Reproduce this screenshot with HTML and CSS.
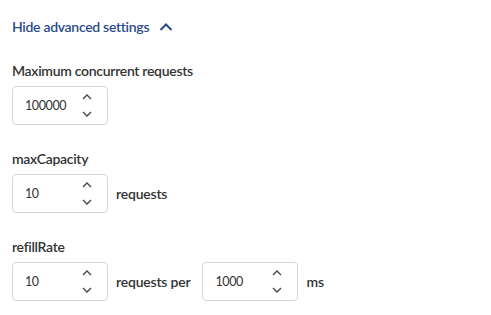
FILE: index.html
```html
<!DOCTYPE html>
<html lang="en">
<head>
    <meta charset="UTF-8">
    <title>Advanced settings</title>
    <link rel="stylesheet" href="styles.css">
</head>
<body>
    <div class="settings">
        <button class="toggle" type="button">
            Hide advanced settings
            <svg class="toggle-icon" width="14" height="10" viewBox="0 0 14 10"><path d="M1.5 8 L7 2.5 L12.5 8" fill="none" stroke="currentColor" stroke-width="2"/></svg>
        </button>

        <div class="field">
            <label class="field-label">Maximum concurrent requests</label>
            <div class="field-row">
                <div class="number">
                    <span class="number-value">100000</span>
                    <span class="spin">
                        <svg width="12" height="8" viewBox="0 0 12 8"><path d="M2 6 L6 2 L10 6" fill="none" stroke="currentColor" stroke-width="1.3"/></svg>
                        <svg width="12" height="8" viewBox="0 0 12 8"><path d="M2 2 L6 6 L10 2" fill="none" stroke="currentColor" stroke-width="1.3"/></svg>
                    </span>
                </div>
            </div>
        </div>

        <div class="field">
            <label class="field-label">maxCapacity</label>
            <div class="field-row">
                <div class="number">
                    <span class="number-value">10</span>
                    <span class="spin">
                        <svg width="12" height="8" viewBox="0 0 12 8"><path d="M2 6 L6 2 L10 6" fill="none" stroke="currentColor" stroke-width="1.3"/></svg>
                        <svg width="12" height="8" viewBox="0 0 12 8"><path d="M2 2 L6 6 L10 2" fill="none" stroke="currentColor" stroke-width="1.3"/></svg>
                    </span>
                </div>
                <span class="unit">requests</span>
            </div>
        </div>

        <div class="field">
            <label class="field-label">refillRate</label>
            <div class="field-row">
                <div class="number">
                    <span class="number-value">10</span>
                    <span class="spin">
                        <svg width="12" height="8" viewBox="0 0 12 8"><path d="M2 6 L6 2 L10 6" fill="none" stroke="currentColor" stroke-width="1.3"/></svg>
                        <svg width="12" height="8" viewBox="0 0 12 8"><path d="M2 2 L6 6 L10 2" fill="none" stroke="currentColor" stroke-width="1.3"/></svg>
                    </span>
                </div>
                <span class="unit unit-between">requests per</span>
                <div class="number">
                    <span class="number-value">1000</span>
                    <span class="spin">
                        <svg width="12" height="8" viewBox="0 0 12 8"><path d="M2 6 L6 2 L10 6" fill="none" stroke="currentColor" stroke-width="1.3"/></svg>
                        <svg width="12" height="8" viewBox="0 0 12 8"><path d="M2 2 L6 6 L10 2" fill="none" stroke="currentColor" stroke-width="1.3"/></svg>
                    </span>
                </div>
                <span class="unit">ms</span>
            </div>
        </div>
    </div>
</body>
</html>
```

FILE: styles.css
```css
* {
    margin: 0;
    padding: 0;
    box-sizing: border-box;
}

body {
    font-family: 'Lato', sans-serif;
    background: white;
    color: #333;
    padding: 17px 12px;
}

.settings {
    display: flex;
    flex-direction: column;
    gap: 24px;
}

.toggle {
    display: flex;
    align-items: center;
    gap: 10px;
    background: none;
    border: none;
    font-family: inherit;
    font-size: 14px;
    font-weight: 600;
    letter-spacing: -0.3px;
    line-height: 20px;
    color: #2b4a8b;
    cursor: pointer;
    align-self: flex-start;
}

.field-label {
    display: block;
    font-size: 14px;
    font-weight: 600;
    letter-spacing: -0.3px;
    line-height: 20px;
    margin-bottom: 5px;
}

.field-row {
    display: flex;
    align-items: center;
    gap: 8px;
}

.number {
    width: 96px;
    height: 39px;
    border: 1px solid #d6d6d6;
    border-radius: 4px;
    display: flex;
    align-items: center;
    justify-content: space-between;
    padding: 0 14px 0 12px;
    font-size: 12.5px;
    letter-spacing: -0.4px;
}

.spin {
    display: flex;
    flex-direction: column;
    gap: 9px;
    color: #444;
}

.spin svg {
    display: block;
}

.unit {
    font-size: 14px;
    font-weight: 600;
    letter-spacing: -0.2px;
}

.unit-between {
    margin-right: 4px;
}
```
